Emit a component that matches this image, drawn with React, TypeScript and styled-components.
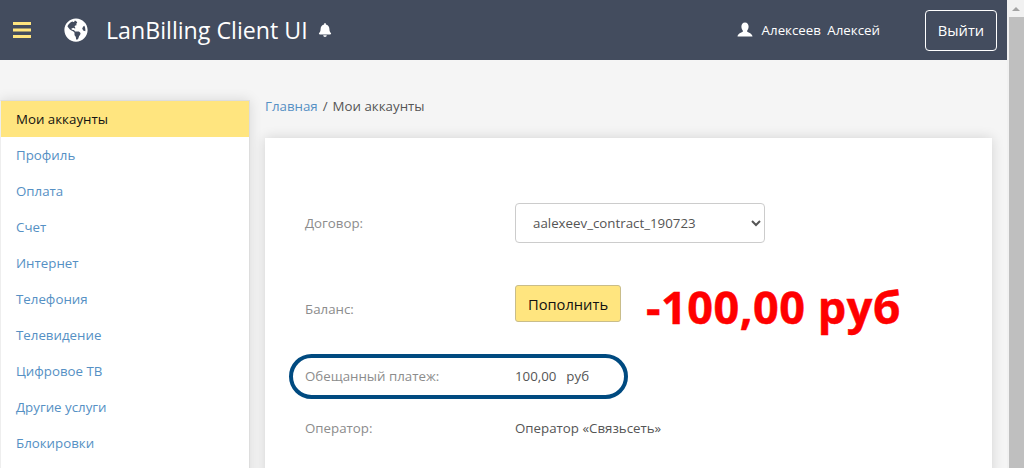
import React from "react";
import styled, { createGlobalStyle } from "styled-components";
import { FaGlobeAmericas, FaBell } from "react-icons/fa";

const Global = createGlobalStyle`
  html, body { margin: 0; padding: 0; height: 468px; overflow: hidden; background: #f5f5f5; }
  * { box-sizing: border-box; }
  body { font-family: "Open Sans", "Noto Sans", sans-serif; font-size: 13.3px; color: #555; }
`;

const Page = styled.div`
  display: flex;
  width: 1024px;
  height: 468px;
  overflow: hidden;
`;
const Main = styled.div`
  flex: 1;
  min-width: 0;
  display: flex;
  flex-direction: column;
`;
const ScrollBar = styled.div`
  width: 17px;
  flex: none;
  background: #f1f1f1;
  display: flex;
  flex-direction: column;
`;
const ScrollArrow = styled.div`
  height: 17px;
  display: flex;
  align-items: center;
  justify-content: center;
  &::before {
    content: "";
    border-left: 4px solid transparent;
    border-right: 4px solid transparent;
    border-bottom: 4px solid #a3a3a3;
  }
`;
const ScrollThumb = styled.div`
  flex: 1;
  margin-left: 2px;
  background: #bfbfbf;
`;
const Header = styled.header`
  height: 60px;
  flex: none;
  background: #434c5e;
  display: flex;
  align-items: center;
  padding: 0 10px 0 13px;
  color: #fff;
`;
const BurgerIcon = styled.svg`
  width: 18px;
  height: 16px;
  fill: #ffe57f;
  margin-right: 33px;
`;
const Globe = styled.span`
  display: flex;
  font-size: 24px;
  margin-right: 18px;
`;
const Brand = styled.span`
  font-size: 23.2px;
  line-height: 30px;
  margin-right: 10px;
`;
const Bell = styled.span`
  display: flex;
  font-size: 14px;
`;
const Spacer = styled.div`
  flex: 1;
`;
const UserIcon = styled.svg`
  width: 16px;
  height: 16px;
  margin-right: 9px;
  fill: #fff;
`;
const UserName = styled.span`
  font-size: 13.3px;
  word-spacing: 3px;
  margin-right: 45px;
`;
const Logout = styled.button`
  width: 72px;
  height: 41px;
  background: transparent;
  border: 1px solid #fff;
  border-radius: 4px;
  color: #fff;
  font: inherit;
  font-size: 14.7px;
  padding: 0;
`;
const Body = styled.div`
  flex: 1;
  min-height: 0;
  display: flex;
  align-items: flex-start;
  padding-top: 40px;
`;
const Sidebar = styled.nav`
  width: 250px;
  flex: none;
  height: 400px;
  background: #fff;
  border: 1px solid #ddd;
  border-left-color: #eee;
  border-bottom: none;
  box-shadow: 0 0 12px rgba(0, 0, 0, 0.12);
  margin-right: 15px;
`;
const NavItem = styled.a<{ $active?: boolean }>`
  display: flex;
  align-items: center;
  height: 36px;
  padding-left: 15px;
  color: ${(p) => (p.$active ? "#111" : "#5590c4")};
  background: ${(p) => (p.$active ? "#ffe57f" : "transparent")};
`;
const Content = styled.div`
  width: 727px;
  flex: none;
  display: flex;
  flex-direction: column;
`;
const Crumbs = styled.div`
  height: 38px;
  line-height: 12px;
  color: #555;
`;
const CrumbLink = styled.a`
  color: #5590c4;
`;
const CrumbSep = styled.span`
  margin: 0 5px;
`;
const Card = styled.section`
  height: 340px;
  background: #fff;
  box-shadow: 0 0 12px rgba(0, 0, 0, 0.14);
  padding: 65px 0 0 40px;
`;
const Row = styled.div<{ $h: number; $top?: number; $bottom?: number }>`
  position: relative;
  display: flex;
  align-items: center;
  height: ${(p) => p.$h}px;
  padding-top: ${(p) => p.$top ?? 0}px;
  padding-bottom: ${(p) => p.$bottom ?? 0}px;
`;
const Label = styled.div<{ $drop?: number }>`
  width: 210px;
  flex: none;
  color: #8c8c8c;
  padding-top: ${(p) => p.$drop ?? 0}px;
`;
const SelectBox = styled.select`
  width: 250px;
  height: 40px;
  padding: 0 13px;
  border: 1px solid #ccc;
  border-radius: 4px;
  background: #fff;
  color: #555;
  font: inherit;
`;
const TopUp = styled.button`
  width: 106px;
  height: 37px;
  background: #ffe57f;
  border: 1px solid #c9bd8a;
  border-radius: 3px;
  color: #111;
  font: inherit;
  font-size: 14.7px;
  padding: 0;
`;
const BigAmount = styled.span`
  margin-left: 25px;
  padding-top: 6px;
  font-size: 45px;
  font-weight: 700;
  letter-spacing: 0.5px;
  line-height: 50px;
  color: #f00;
  -webkit-text-stroke: 0.5px #f00;
`;
const Value = styled.span<{ $wordGap?: number }>`
  color: #555;
  white-space: pre;
  word-spacing: ${(p) => p.$wordGap ?? 0}px;
`;
const Oval = styled.div`
  position: absolute;
  left: -16px;
  top: 0;
  width: 339px;
  height: 45px;
  border: 4px solid #004a80;
  border-radius: 23px;
  pointer-events: none;
`;

const items = ["Профиль", "Оплата", "Счет", "Интернет", "Телефония", "Телевидение", "Цифровое ТВ", "Другие услуги", "Блокировки"];

export default function App() {
  return (
    <Page>
      <Global />
      <Main>
        <Header>
          <BurgerIcon viewBox="0 0 18 16">
            <rect x="0" y="0" width="18" height="3" />
            <rect x="0" y="6.5" width="18" height="3" />
            <rect x="0" y="13" width="18" height="3" />
          </BurgerIcon>
          <Globe><FaGlobeAmericas /></Globe>
          <Brand>LanBilling Client UI</Brand>
          <Bell><FaBell /></Bell>
          <Spacer />
          <UserIcon viewBox="0 0 16 16">
            <path d="M8 0.5c2.3 0 3.6 1.7 3.6 4 0 1.6-.6 3-1.4 3.9v1.4c.8.6 4.8 1.4 5.3 4.7H.5c.5-3.3 4.5-4.1 5.3-4.7V8.4C5 7.5 4.4 6.1 4.4 4.5c0-2.3 1.3-4 3.6-4z" />
          </UserIcon>
          <UserName>Алексеев Алексей</UserName>
          <Logout>Выйти</Logout>
        </Header>
        <Body>
          <Sidebar>
            <NavItem $active>Мои аккаунты</NavItem>
            {items.map((t) => (
              <NavItem key={t}>{t}</NavItem>
            ))}
          </Sidebar>
          <Content>
            <Crumbs>
              <CrumbLink>Главная</CrumbLink>
              <CrumbSep>/</CrumbSep>Мои аккаунты
            </Crumbs>
            <Card>
              <Row $h={40}>
                <Label>Договор:</Label>
                <SelectBox defaultValue="a">
                  <option value="a">aalexeev_contract_190723</option>
                </SelectBox>
              </Row>
              <Row $h={111} $top={10}>
                <Label $drop={11}>Баланс:</Label>
                <TopUp>Пополнить</TopUp>
                <BigAmount>-100,00 руб</BigAmount>
              </Row>
              <Row $h={45} $bottom={2}>
                <Oval />
                <Label>Обещанный платеж:</Label>
                <Value $wordGap={1.5}>100,00  руб</Value>
              </Row>
              <Row $h={58}>
                <Label>Оператор:</Label>
                <Value>Оператор «Связьсеть»</Value>
              </Row>
            </Card>
          </Content>
        </Body>
      </Main>
      <ScrollBar>
        <ScrollArrow />
        <ScrollThumb />
      </ScrollBar>
    </Page>
  );
}
